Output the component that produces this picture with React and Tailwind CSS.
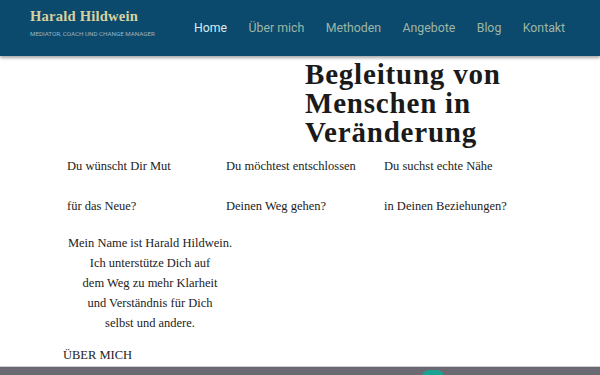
import React from 'react'

const NAV = ['Home', 'Über mich', 'Methoden', 'Angebote', 'Blog', 'Kontakt']

const TEASERS = [
  ['Du wünscht Dir Mut', 'für das Neue?'],
  ['Du möchtest entschlossen', 'Deinen Weg gehen?'],
  ['Du suchst echte Nähe', 'in Deinen Beziehungen?'],
]

export default function App() {
  return (
    <div className="relative w-[600px] h-[375px] overflow-hidden bg-white text-[#222]" style={{ fontFamily: '"Liberation Serif", serif' }}>
      {/* Header */}
      <header className="relative z-10 h-[56px] bg-[#0b4a6c] flex items-start shadow-[0_2px_3px_rgba(0,0,0,0.35)]">
        <div className="pl-[30px] pt-[6px] w-[194px]">
          <div className="text-[14.6px] font-bold leading-[20px] text-[#d9d0a0] tracking-[0.2px]">Harald Hildwein</div>
          <div className="mt-[4px] text-[6.2px] uppercase text-[#9db4c2] whitespace-nowrap" style={{ fontFamily: 'Roboto, sans-serif' }}>
            Mediator, Coach und Change Manager
          </div>
        </div>
        <nav className="flex gap-[21.5px] pt-[19px] text-[12.3px]" style={{ fontFamily: 'Roboto, sans-serif' }}>
          {NAV.map((item, i) => (
            <span key={item} className={i === 0 ? 'text-[#dcebf2]' : 'text-[#9fb6a6]'}>{item}</span>
          ))}
        </nav>
      </header>

      {/* Hero heading */}
      <div className="flex mt-[4px]">
        <div className="w-[305px] shrink-0" />
        <h1 className="text-[29px] font-bold leading-[29px] tracking-[0.8px] text-[#1a1a1a]">
          Begleitung von<br />Menschen in<br />Veränderung
        </h1>
      </div>

      {/* Teasers */}
      <div className="grid grid-cols-[159px_158px_160px] pl-[67px] mt-[9px] text-[12.5px] leading-[20px]">
        {TEASERS.map(([a, b]) => (
          <div key={a}>
            <p>{a}</p>
            <p className="mt-[20px]">{b}</p>
          </div>
        ))}
      </div>

      {/* Intro */}
      <p className="ml-[50px] w-[200px] mt-[17px] text-center text-[12.5px] leading-[20px]">
        Mein Name ist Harald Hildwein.<br />
        Ich unterstütze Dich auf<br />
        dem Weg zu mehr Klarheit<br />
        und Verständnis für Dich<br />
        selbst und andere.
      </p>

      <div className="pl-[63px] mt-[12px] text-[12.5px] leading-[20px] uppercase">Über mich</div>

      {/* Bottom bar */}
      <div className="absolute left-0 right-0 top-[366px] h-[9px] bg-[#6b6a72] border-t border-[#cfcfd2]">
        <div className="absolute left-[422px] top-[3px] w-[22px] h-[14px] rounded-full bg-[#1aa293]" />
      </div>
    </div>
  )
}
